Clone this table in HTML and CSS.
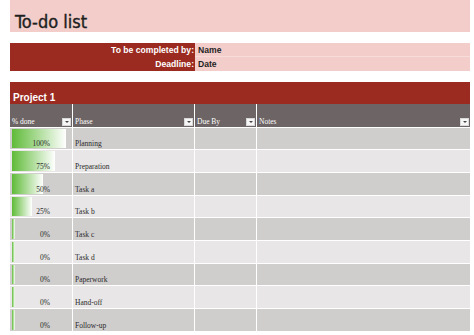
FILE: index.html
```html
<!DOCTYPE html>
<html>
<head>
<meta charset="utf-8">
<link rel="stylesheet" href="styles.css">
</head>
<body>
<div class="page">
  <div class="title-band"><h1 class="title">To-do list</h1></div>

  <div class="info">
    <div class="info-label">To be completed by:</div>
    <div class="info-value first">Name</div>
    <div class="info-label">Deadline:</div>
    <div class="info-value">Date</div>
  </div>

  <div class="project">Project 1</div>

  <div class="table">
    <div class="row head">
      <div class="cell"><span>% done</span><span class="filter"></span></div>
      <div class="cell"><span>Phase</span><span class="filter"></span></div>
      <div class="cell"><span>Due By</span><span class="filter"></span></div>
      <div class="cell"><span>Notes</span><span class="filter"></span></div>
    </div>
    <div class="row dark">
      <div class="cell pct" style="--bar: 54px">100%</div><div class="cell">Planning</div><div class="cell"></div><div class="cell"></div>
    </div>
    <div class="row light">
      <div class="cell pct" style="--bar: 43px">75%</div><div class="cell">Preparation</div><div class="cell"></div><div class="cell"></div>
    </div>
    <div class="row dark">
      <div class="cell pct" style="--bar: 31px">50%</div><div class="cell">Task a</div><div class="cell"></div><div class="cell"></div>
    </div>
    <div class="row light">
      <div class="cell pct" style="--bar: 20px">25%</div><div class="cell">Task b</div><div class="cell"></div><div class="cell"></div>
    </div>
    <div class="row dark">
      <div class="cell pct" style="--bar: 3px">0%</div><div class="cell">Task c</div><div class="cell"></div><div class="cell"></div>
    </div>
    <div class="row light">
      <div class="cell pct" style="--bar: 3px">0%</div><div class="cell">Task d</div><div class="cell"></div><div class="cell"></div>
    </div>
    <div class="row dark">
      <div class="cell pct" style="--bar: 3px">0%</div><div class="cell">Paperwork</div><div class="cell"></div><div class="cell"></div>
    </div>
    <div class="row light">
      <div class="cell pct" style="--bar: 3px">0%</div><div class="cell">Hand-off</div><div class="cell"></div><div class="cell"></div>
    </div>
    <div class="row dark">
      <div class="cell pct" style="--bar: 3px">0%</div><div class="cell">Follow-up</div><div class="cell"></div><div class="cell"></div>
    </div>
  </div>
</div>
</body>
</html>
```

FILE: styles.css
```css
html, body {
  margin: 0;
  padding: 0;
  background: #ffffff;
}

.page {
  width: 460px;
  padding: 0 4px 0 10px;
  display: flex;
  flex-direction: column;
}

.title-band {
  height: 32px;
  background: #f3cdca;
  display: flex;
  align-items: flex-end;
  padding: 0 0 1px 5px;
  box-sizing: border-box;
}

.title {
  margin: 0;
  font-family: "DejaVu Sans Condensed", "DejaVu Sans", sans-serif;
  font-stretch: condensed;
  font-weight: normal;
  font-size: 18px;
  line-height: 18px;
  color: #1f1f1f;
  -webkit-text-stroke: 0.4px #1f1f1f;
}

.info {
  margin-top: 11px;
  display: grid;
  grid-template-columns: 185px 275px;
  grid-auto-rows: 14px;
  font-family: "Liberation Sans", Arial, sans-serif;
  font-weight: bold;
  font-size: 8.6px;
  line-height: 14px;
}

.info-label {
  background: #9b2b20;
  color: #ffffff;
  text-align: right;
  padding-right: 1px;
}

.info-value {
  background: #f3cdca;
  color: #1f1f1f;
  padding-left: 3px;
}

.info-value.first {
  box-shadow: inset 0 -1px 0 #f8dcda;
}

.project {
  margin-top: 11px;
  height: 22px;
  box-sizing: border-box;
  background: #9b2b20;
  color: #ffffff;
  font-family: "Liberation Sans", Arial, sans-serif;
  font-weight: bold;
  font-size: 10px;
  line-height: 10px;
  display: flex;
  align-items: flex-end;
  padding: 0 0 1.5px 3px;
}

.table {
  display: flex;
  flex-direction: column;
  gap: 1px;
  background: #ffffff;
  font-family: "Liberation Serif", "Times New Roman", serif;
  font-size: 7.5px;
  line-height: 9px;
}

.row {
  display: grid;
  grid-template-columns: 62px 121px 61px 213px;
  column-gap: 1px;
  height: 21.7px;
}

.row.head {
  height: 22.6px;
}

.cell {
  display: flex;
  align-items: flex-end;
  padding: 0 0 1px 2px;
  box-sizing: border-box;
  color: #2b2b2b;
  white-space: nowrap;
}

.head .cell {
  background: #6c6465;
  color: #ffffff;
  justify-content: space-between;
  padding: 0 1px 1px 2px;
}

.dark .cell {
  background: #d0cdcd;
}

.light .cell {
  background: #e8e6e6;
}

.cell.pct {
  justify-content: flex-end;
  padding-right: 22px;
  background-image: linear-gradient(to right, #5fbb38, #ffffff);
  background-repeat: no-repeat;
  background-position: 2px 1px;
  background-size: var(--bar) calc(100% - 2px);
}

.filter {
  width: 9px;
  height: 8px;
  background: #f6f6f6;
  border: 0.5px solid #d8d8d8;
  box-sizing: border-box;
  display: flex;
  align-items: center;
  justify-content: center;
}

.filter::after {
  content: "";
  width: 0;
  height: 0;
  border-left: 2px solid transparent;
  border-right: 2px solid transparent;
  border-top: 2px solid #444444;
}
```
